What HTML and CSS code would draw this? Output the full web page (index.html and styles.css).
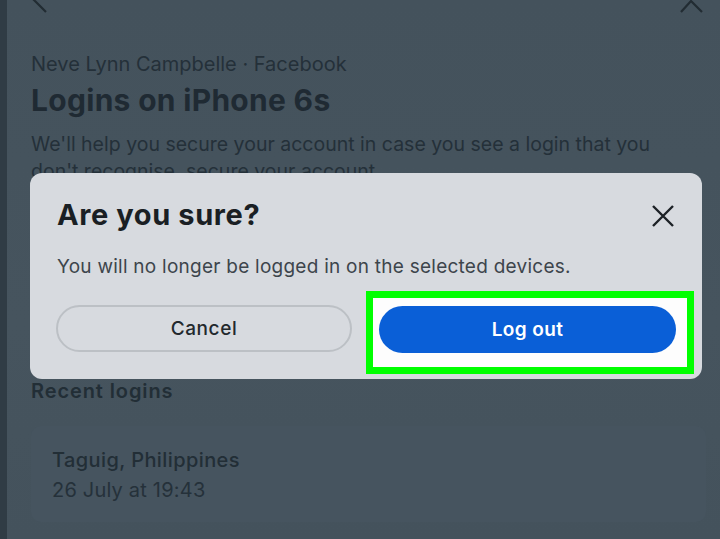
FILE: index.html
```html
<!DOCTYPE html>
<html>
<head>
<meta charset="utf-8">
<link rel="stylesheet" href="styles.css">
</head>
<body>
<div class="screen">
  <div class="edge"></div>
  <div class="page">
    <div class="topbar">
      <svg class="back" width="20" height="14" viewBox="0 0 20 14"><path d="M14 -10 L3 0 L15 12" fill="none" stroke="#222c33" stroke-width="2.2"/></svg>
      <svg class="topclose" width="26" height="14" viewBox="0 0 26 14"><path d="M2 12 L12 1 L23 12" fill="none" stroke="#222c33" stroke-width="2.2"/></svg>
    </div>
    <div class="meta">Neve Lynn Campbelle · Facebook</div>
    <h1 class="title">Logins on iPhone 6s</h1>
    <p class="desc">We'll help you secure your account in case you see a login that you don't recognise, secure your account.</p>
    <div class="spacer"></div>
    <h2 class="section">Recent logins</h2>
    <div class="card">
      <div class="place">Taguig, Philippines</div>
      <div class="time">26 July at 19:43</div>
    </div>
  </div>
  <div class="dialog">
    <div class="dhead">
      <div class="dtitle">Are you sure?</div>
      <svg class="x" width="26" height="26" viewBox="0 0 26 26"><path d="M3 3 L23 23 M23 3 L3 23" stroke="#1c2126" stroke-width="2.4" fill="none"/></svg>
    </div>
    <div class="dtext">You will no longer be logged in on the selected devices.</div>
    <div class="actions">
      <button class="btn cancel">Cancel</button>
      <div class="highlight"><button class="btn logout">Log out</button></div>
    </div>
  </div>
</div>
</body>
</html>
```
FILE: styles.css
```css
* { box-sizing: border-box; }
html, body { margin: 0; padding: 0; }
body { width: 720px; height: 539px; overflow: hidden; background: #45535d; font-family: "Inter", "Liberation Sans", sans-serif; }
.screen { position: relative; width: 720px; height: 539px; display: flex; background: linear-gradient(180deg, #44525c 0%, #46545e 60%, #44525c 100%); }
.edge { width: 7px; background: #303c45; flex: none; }
.page { flex: 1; padding: 0 0 0 24px; color: #222e36; }
.topbar { height: 40px; position: relative; }
.back { position: absolute; left: 0; top: 0; }
.topclose { position: absolute; right: 15px; top: 0; }
.meta { font-size: 20px; color: #243039; margin-top: 12px; letter-spacing: 0; }
.title { font-size: 30px; font-weight: 700; margin: 6px 0 0; color: #1f2a33; letter-spacing: 0.3px; }
.desc { font-size: 19.5px; line-height: 27px; margin: 13px 0 0; width: 640px; color: #243039; letter-spacing: 0; }
.spacer { height: 194px; }
.section { font-size: 20px; font-weight: 600; margin: 0; color: #222e36; letter-spacing: 0.9px; }
.card { margin: 23px 14px 0 0; padding: 22px 21px 20px; background: #46545f; border-radius: 10px; }
.place { font-size: 20px; font-weight: 500; color: #222e36; letter-spacing: 0.4px; }
.time { font-size: 20px; color: #25313a; margin-top: 6px; letter-spacing: 0.2px; }
.dialog { position: absolute; left: 30px; top: 173px; width: 672px; height: 206px; background: #d7dadf; border-radius: 12px; padding: 26px 26px 0 27px; }
.dhead { display: flex; justify-content: space-between; align-items: center; height: 30px; }
.dtitle { font-size: 29px; font-weight: 700; color: #1a1f24; letter-spacing: 0.6px; }
.x { margin-right: 0; margin-top: 4px; }
.dtext { font-size: 19px; color: #3d454c; margin-top: 26px; letter-spacing: 0.25px; }
.actions { display: flex; align-items: flex-start; margin-top: 13px; gap: 14px; margin-left: -1px; margin-right: -18px; }
.btn { font-family: inherit; height: 47px; border-radius: 24px; font-size: 19px; font-weight: 600; width: 296px; flex: none; letter-spacing: 0.4px; }
.cancel { background: #d7dadf; border: 2px solid #bcc0c5; color: #22282d; margin-top: 14px; font-weight: 500; letter-spacing: 0.6px; }
.highlight { flex: none; border: 7px solid #00ff00; background: #fdfdfd; padding: 8px 11px 14px 6px; width: 328px; height: 83px; }
.logout { background: #0a5fd7; border: none; color: #fff; width: 297px; height: 47px; }
```
